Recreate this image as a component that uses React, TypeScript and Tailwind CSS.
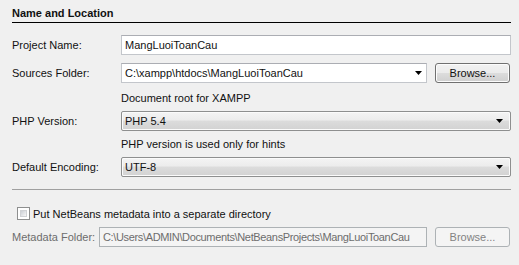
import React from 'react';

const font = { fontFamily: '"Liberation Sans", Arial, sans-serif' };

function Arrow() {
  return (
    <svg width="7" height="4" viewBox="0 0 7 4" className="shrink-0">
      <path d="M0 0 H7 L3.5 4 Z" fill="#000" />
    </svg>
  );
}

function Label({ children, muted }: { children: React.ReactNode; muted?: boolean }) {
  return (
    <div className={`w-[109px] shrink-0 ${muted ? 'text-[#6d6d6d]' : 'text-[#111]'}`}>{children}</div>
  );
}

function TextField({ value }: { value: string }) {
  return (
    <div className="flex-1 h-[20px] flex items-center px-[3px] bg-white border border-[#c3c6cb] border-t-[#abadb3]">
      {value}
    </div>
  );
}

function Combo({ value }: { value: string }) {
  return (
    <div className="flex-1 h-[20px] flex items-center justify-between pl-[3px] pr-[7px] rounded-[2px] border border-[#8e8f8f] shadow-[inset_0_0_0_1px_#fbfbfb] bg-[linear-gradient(#f4f4f4_0%,#ececec_45%,#dcdcdc_50%,#d2d2d2_100%)]">
      <span>{value}</span>
      <Arrow />
    </div>
  );
}

function Button({ disabled }: { disabled?: boolean }) {
  return disabled ? (
    <div className="w-[75px] h-[20px] flex items-center justify-center rounded-[3px] border border-[#adb2b5] bg-[#f4f4f4] text-[#838383]">
      Browse...
    </div>
  ) : (
    <div className="w-[75px] h-[20px] flex items-center justify-center rounded-[3px] border border-[#707070] shadow-[inset_0_0_0_1px_#fcfcfc] bg-[linear-gradient(#f2f2f2_0%,#ebebeb_50%,#dddddd_50%,#cfcfcf_100%)]">
      Browse...
    </div>
  );
}

export default function App() {
  return (
    <div
      className="w-[519px] h-[265px] bg-[#f0f0f0] pl-[12px] pr-[8px] text-[11px] leading-[14px] text-[#111] overflow-hidden"
      style={font}
    >
      {/* Section title */}
      <div className="h-[23px] flex items-end pb-[2px] border-b border-black font-bold">
        Name and Location
      </div>

      <div className="mt-[12px] flex items-center">
        <Label>Project Name:</Label>
        <TextField value="MangLuoiToanCau" />
      </div>

      <div className="mt-[8px] flex items-center">
        <Label>Sources Folder:</Label>
        <div className="w-[306px] h-[20px] flex items-center justify-between pl-[3px] pr-[4px] bg-white border border-[#c3c6cb] border-t-[#abadb3]">
          <span>C:\xampp\htdocs\MangLuoiToanCau</span>
          <Arrow />
        </div>
        <div className="ml-[8px]">
          <Button />
        </div>
      </div>

      <div className="mt-[8px] h-[14px] pl-[109px]">Document root for XAMPP</div>

      <div className="mt-[6px] flex items-center">
        <Label>PHP Version:</Label>
        <Combo value="PHP 5.4" />
      </div>

      <div className="mt-[6px] h-[14px] pl-[109px]">PHP version is used only for hints</div>

      <div className="mt-[6px] flex items-center">
        <Label>Default Encoding:</Label>
        <Combo value="UTF-8" />
      </div>

      <div className="mt-[12px] border-t border-[#a0a0a0]" />

      <div className="mt-[17px] h-[13px] flex items-center pl-[5px]">
        <div className="w-[13px] h-[13px] border border-[#8e8f8f] p-[2px] bg-white">
          <div className="w-full h-full bg-[linear-gradient(135deg,#cbcfd5,#f6f6f6)] border border-[#d0d2d5]" />
        </div>
        <span className="ml-[3px]">Put NetBeans metadata into a separate directory</span>
      </div>

      <div className="mt-[7px] flex items-center">
        <div className="w-[87px] shrink-0 text-[#6d6d6d]">Metadata Folder:</div>
        <div className="w-[328px] h-[20px] flex items-center px-[3px] bg-[#f4f4f4] border border-[#adb2b5] text-[#6d6d6d] whitespace-nowrap overflow-hidden tracking-[-0.35px]">
          C:\Users\ADMIN\Documents\NetBeansProjects\MangLuoiToanCau
        </div>
        <div className="ml-[8px]">
          <Button disabled />
        </div>
      </div>
    </div>
  );
}
